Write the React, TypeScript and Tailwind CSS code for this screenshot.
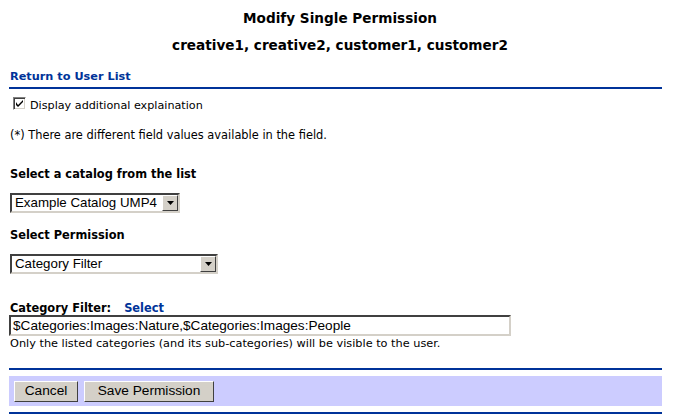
import React from 'react';

const verdana = "font-['DejaVu_Sans',Verdana,sans-serif]";
const arial = "font-['Liberation_Sans',Arial,sans-serif]";

const Arrow = () => (
  <div className="w-[16px] h-[16px] bg-[#d4d0c8] border border-t-white border-l-white border-b-[#404040] border-r-[#404040] flex items-center justify-center">
    <svg width="7" height="4" viewBox="0 0 7 4">
      <path d="M0 0h7L3.5 4z" fill="#000" />
    </svg>
  </div>
);

const Dropdown = ({ value, width }: { value: string; width: string }) => (
  <div className={`${width} h-[20px] border-2 border-t-[#404040] border-l-[#404040] border-b-[#d4d0c8] border-r-[#d4d0c8] bg-white flex items-center justify-between pl-[3px]`}>
    <span className={`${arial} text-[13.3px] text-black leading-none`}>{value}</span>
    <Arrow />
  </div>
);

const WinButton = ({ label, width }: { label: string; width: string }) => (
  <button
    type="button"
    className={`${width} h-[21px] bg-[#d4d0c8] border border-t-white border-l-white border-b-[#404040] border-r-[#404040] ${arial} text-[13.7px] text-black leading-none flex items-center justify-center`}
  >
    {label}
  </button>
);

export default function App() {
  return (
    <div className="w-[680px] h-[418px] bg-white overflow-hidden">
      <div className={`${verdana} font-bold text-[13.6px] text-black text-center mt-[8px] h-[20px] leading-[20px]`}>
        Modify Single Permission
      </div>
      <div className={`${verdana} font-bold text-[13.6px] text-black text-center mt-[7px] h-[20px] leading-[20px]`}>
        creative1, creative2, customer1, customer2
      </div>

      <div className="px-[9px] w-[671px]">
        <div className={`${verdana} font-bold text-[11.3px] text-[#003399] mt-[14px] h-[16px] leading-[16px] pl-[1px]`}>
          Return to User List
        </div>
        <div className="mt-[2px] border-t-2 border-[#003399]" />

        <div className="mt-[6px] h-[18px] flex items-start pl-[4px]">
          <div className="w-[13px] h-[13px] bg-white border border-t-[#808080] border-l-[#808080] border-b-white border-r-white shadow-[inset_1px_1px_0_#404040,inset_-1px_-1px_0_#d4d0c8] flex items-center justify-center mt-[2px]">
            <svg width="7" height="7" viewBox="0 0 7 7">
              <path d="M0 2v3l2 2L7 2V-0L2 5z" fill="#000" />
            </svg>
          </div>
          <span className={`${verdana} text-[11.2px] text-black ml-[4px] leading-[16px] mt-[3px]`}>
            Display additional explaination
          </span>
        </div>

        <div className={`${verdana} text-[11.4px] text-black mt-[14px] h-[16px] leading-[16px] pl-[1px]`}>
          (*) There are different field values available in the field.
        </div>

        <div className={`${verdana} font-bold text-[11.4px] text-black mt-[23px] h-[16px] leading-[16px] pl-[1px]`}>
          Select a catalog from the list
        </div>
        <div className="mt-[11px] pl-[1px]">
          <Dropdown value="Example Catalog UMP4" width="w-[170px]" />
        </div>

        <div className={`${verdana} font-bold text-[11.4px] text-black mt-[14px] h-[16px] leading-[16px] pl-[1px]`}>
          Select Permission
        </div>
        <div className="mt-[11px] pl-[1px]">
          <Dropdown value="Category Filter" width="w-[208px]" />
        </div>

        <div className={`${verdana} font-bold text-[11.4px] mt-[28px] h-[13px] leading-[13px] pl-[1px] flex gap-[13px]`}>
          <span className="text-black">Category Filter:</span>
          <span className="text-[#003399]">Select</span>
        </div>
        <div className="w-[502px] h-[21px] border-2 border-t-[#404040] border-l-[#404040] border-b-[#d4d0c8] border-r-[#d4d0c8] bg-white flex items-center pl-[2px]">
          <span className={`${arial} text-[13.6px] text-black leading-none`}>
            $Categories:Images:Nature,$Categories:Images:People
          </span>
        </div>
        <div className={`${verdana} text-[11.3px] text-black h-[15px] leading-[15px] pl-[1px]`}>
          Only the listed categories (and its sub-categories) will be visible to the user.
        </div>

        <div className="mt-[17px] border-t-2 border-[#003399]" />
        <div className="mt-[6px] h-[30px] bg-[#ccccff] flex items-center gap-[6px] pl-[5px]">
          <WinButton label="Cancel" width="w-[64px]" />
          <WinButton label="Save Permission" width="w-[130px]" />
        </div>
        <div className="mt-[6px] border-t-2 border-[#003399]" />
      </div>
    </div>
  );
}
